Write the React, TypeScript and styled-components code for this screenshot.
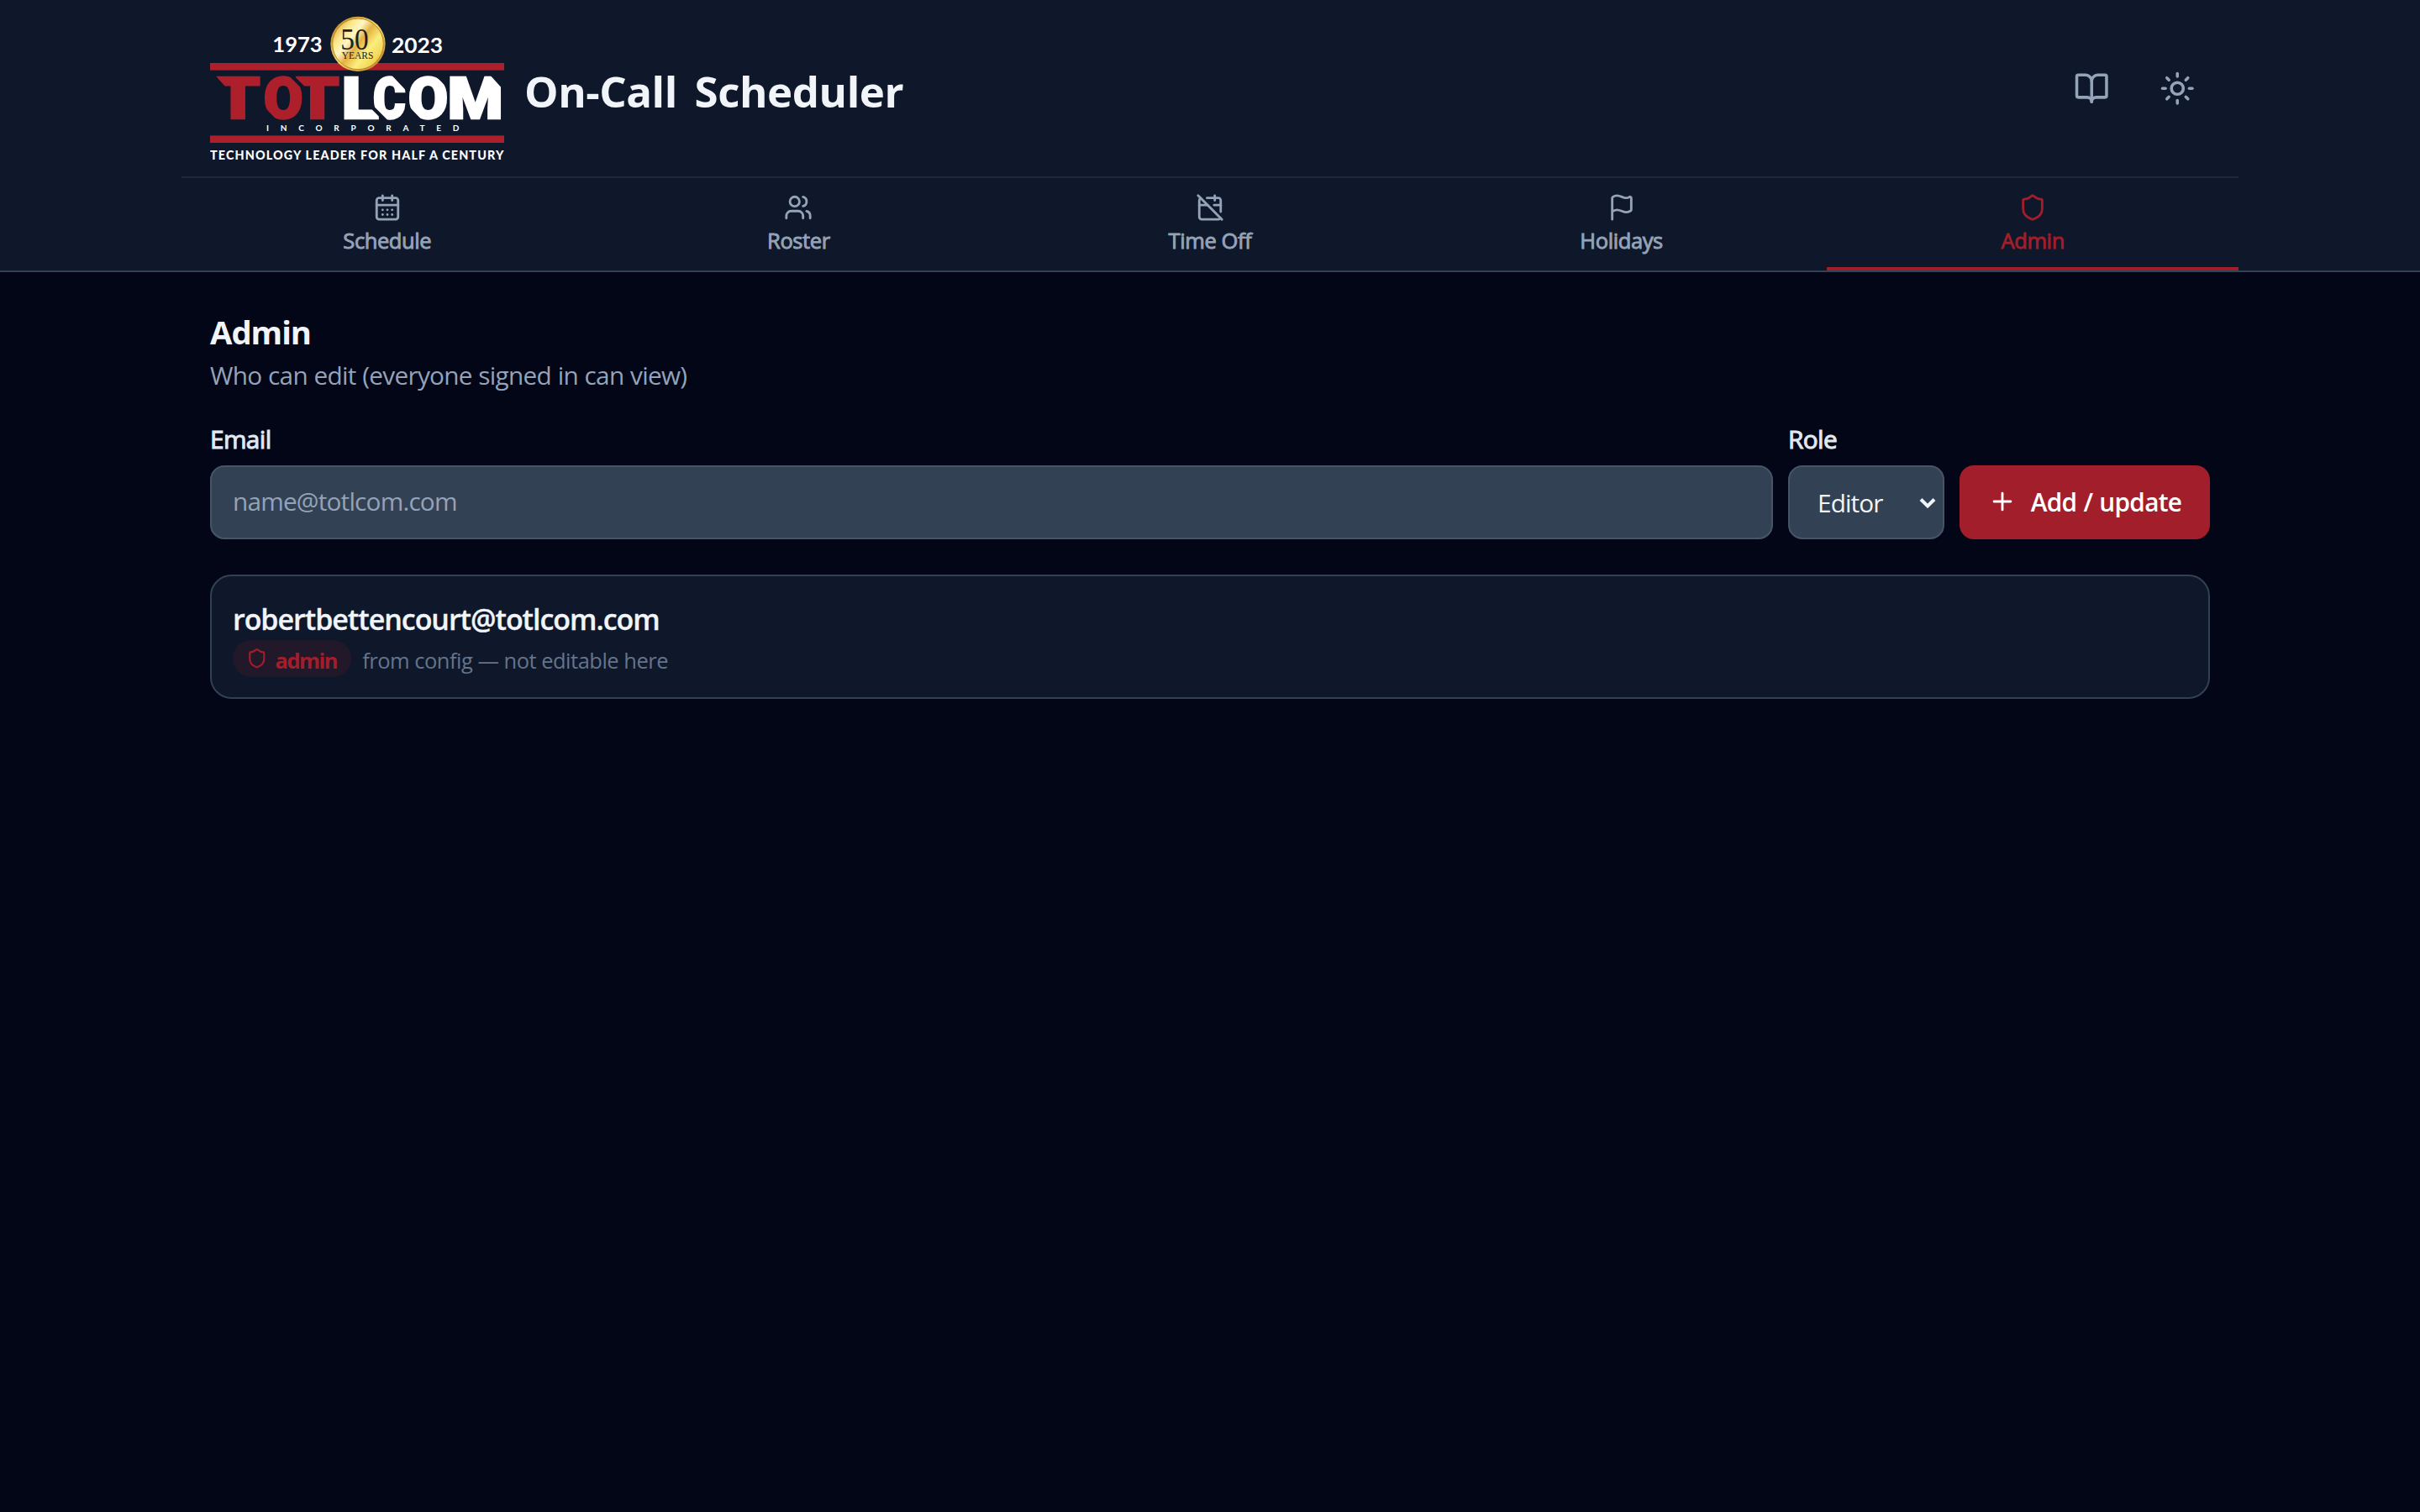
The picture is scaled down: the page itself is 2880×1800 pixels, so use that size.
import { useState } from "react";
import styled, { createGlobalStyle } from "styled-components";
import {
  BookOpen,
  CalendarDays,
  CalendarOff,
  Flag,
  Plus,
  Shield,
  Sun,
  Users,
} from "lucide-react";

const tabs = [
  { id: 1, name: "Schedule", icon: CalendarDays },
  { id: 2, name: "Roster", icon: Users },
  { id: 3, name: "Time Off", icon: CalendarOff },
  { id: 4, name: "Holidays", icon: Flag },
  { id: 5, name: "Admin", icon: Shield },
];

const users = [{ email: "robertbettencourt@totlcom.com", role: "admin" }];

function Logo() {
  return (
    <LogoSvg viewBox="60 51 1050 528" preserveAspectRatio="none">
      <defs>
        <linearGradient id="coin" x1="0" y1="0.1" x2="1" y2="0.9">
          <stop offset="0" stopColor="#d9a032" />
          <stop offset="0.22" stopColor="#fbe88a" />
          <stop offset="0.36" stopColor="#fff6c4" />
          <stop offset="0.5" stopColor="#e3b243" />
          <stop offset="0.68" stopColor="#fbee7c" />
          <stop offset="0.85" stopColor="#f3d65a" />
          <stop offset="1" stopColor="#c98a22" />
        </linearGradient>
        <linearGradient id="rim" x1="0" y1="0" x2="1" y2="1">
          <stop offset="0" stopColor="#b87a1c" />
          <stop offset="0.5" stopColor="#f4d868" />
          <stop offset="1" stopColor="#b5761a" />
        </linearGradient>
      </defs>

      <rect x="60" y="225" width="1050" height="26" fill="#ad1f2a" />
      <rect x="60" y="484" width="1050" height="26" fill="#ad1f2a" />

      <circle cx="588" cy="157" r="98" fill="url(#rim)" />
      <circle cx="588" cy="157" r="91" fill="url(#coin)" stroke="#b98728" strokeWidth="3" />
      <CoinText x="526" y="178" fontSize="106" textLength="100">50</CoinText>
      <CoinText x="530" y="210" fontSize="38" textLength="113">YEARS</CoinText>

      <YearText x="283" y="187" textLength="178">1973</YearText>
      <YearText x="708" y="190" textLength="183">2023</YearText>

      <WordMark $color="#ad1f2a" y="423">
        <Letter x="82" textLength="157">T</Letter>
        <Letter x="252" textLength="139">O</Letter>
        <Letter x="366" textLength="155">T</Letter>
      </WordMark>
      <WordMark $color="#ffffff" y="423">
        <Letter x="530" textLength="132">L</Letter>
        <Letter x="642" textLength="116">C</Letter>
        <Letter x="768" textLength="141">O</Letter>
        <Letter x="908" textLength="198">M</Letter>
      </WordMark>
      {/* slanted corners of the word mark */}
      <g fill="#0f172a">
        <path d="M74 264L122 318V322H74z" />
        <path d="M246 374L302 432H246z" />
        <path d="M706 266L757 320V266z" />
        <path d="M764 374L820 432H764z" />
        <path d="M860 266L914 320V266z" />
        <path d="M1058 266L1108 322V266z" />
      </g>
      <g stroke="#0f172a" strokeWidth="13">
        <path d="M344 264L404 324" />
        <path d="M628 372L688 432" />
      </g>

      <SmallText x="261" y="467" fontSize="30" textLength="688">INCORPORATED</SmallText>
      <TagText x="60" y="570" textLength="1048">TECHNOLOGY LEADER FOR HALF A CENTURY</TagText>
    </LogoSvg>
  );
}

export default function App() {
  const [activeTab, setActiveTab] = useState(5);
  const [email, setEmail] = useState("");
  const [role, setRole] = useState("editor");

  return (
    <>
      <GlobalStyle />
      <Header>
        <HeaderInner>
          <TopBar>
            <Logo />
            <Title>On-Call Scheduler</Title>
            <IconButton aria-label="Guide">
              <BookOpen size={42.5} />
            </IconButton>
            <IconButton aria-label="Theme">
              <Sun size={42.5} />
            </IconButton>
          </TopBar>
          <Nav>
            {tabs.map(({ id, name, icon: Icon }) => (
              <Tab key={id} $active={id === activeTab} onClick={() => setActiveTab(id)}>
                <Icon size={34} />
                <TabLabel>{name}</TabLabel>
              </Tab>
            ))}
          </Nav>
        </HeaderInner>
      </Header>

      <Main>
        <PageTitle>Admin</PageTitle>
        <PageDesc>Who can edit (everyone signed in can view)</PageDesc>

        <Form onSubmit={(e) => e.preventDefault()}>
          <EmailField>
            <Label>Email</Label>
            <Input
              value={email}
              placeholder="name@totlcom.com"
              onChange={(e) => setEmail(e.target.value)}
            />
          </EmailField>
          <RoleField>
            <Label>Role</Label>
            <SelectWrap>
              <Select value={role} onChange={(e) => setRole(e.target.value)}>
                <option value="editor">Editor</option>
                <option value="admin">Admin</option>
              </Select>
              <Chevron viewBox="0 0 20 14">
                <path d="M2 2.5L10 10.5L18 2.5" />
              </Chevron>
            </SelectWrap>
          </RoleField>
          <SubmitBtn type="submit">
            <Plus size={34} />
            <SubmitText>Add / update</SubmitText>
          </SubmitBtn>
        </Form>

        {users.map((user) => (
          <UserCard key={user.email}>
            <UserEmail>{user.email}</UserEmail>
            <UserMeta>
              <Badge>
                <Shield size={25.5} />
                <BadgeText>{user.role}</BadgeText>
              </Badge>
              <Note>from config — not editable here</Note>
            </UserMeta>
          </UserCard>
        ))}
      </Main>
    </>
  );
}

const GlobalStyle = createGlobalStyle`
  * {
    box-sizing: border-box;
    margin: 0;
    padding: 0;
  }
  body {
    min-height: 100vh;
    background: #020617;
    color: #f1f5f9;
    font-family: "Open Sans", "Noto Sans", sans-serif;
  }
  button, input, select {
    font: inherit;
    color: inherit;
  }
`;

const Header = styled.header`
  background: #0f172a;
  border-bottom: 2px solid #334155;
`;
const HeaderInner = styled.div`
  width: 2448px;
  margin: 0 auto;
`;
const TopBar = styled.div`
  display: flex;
  align-items: center;
  height: 210px;
  padding: 0 35px 0 34px;
`;
const LogoSvg = styled.svg`
  flex: none;
  width: 350px;
  height: 176px;
`;
const CoinText = styled.text.attrs({ lengthAdjust: "spacingAndGlyphs" })`
  font-family: "Liberation Serif", serif;
  fill: #22201a;
`;
const YearText = styled.text.attrs({ lengthAdjust: "spacingAndGlyphs" })`
  font-family: Lato, sans-serif;
  font-size: 76px;
  font-weight: 700;
  fill: #ffffff;
`;
const WordMark = styled.text<{ $color: string }>`
  font-family: Roboto, sans-serif;
  font-size: 205px;
  font-weight: 900;
  fill: ${({ $color }) => $color};
  stroke: ${({ $color }) => $color};
  stroke-width: 8px;
`;
const Letter = styled.tspan.attrs({ lengthAdjust: "spacingAndGlyphs" })``;
const SmallText = styled.text`
  font-family: Lato, sans-serif;
  font-weight: 700;
  fill: #ffffff;
`;
const TagText = styled.text`
  font-family: Lato, sans-serif;
  font-size: 43px;
  font-weight: 900;
  fill: #ffffff;
`;
const Title = styled.h1`
  flex: 1;
  padding-top: 5px;
  margin-left: 24px;
  font-size: 51px;
  font-weight: 700;
  line-height: 60px;
  letter-spacing: -0.45px;
  word-spacing: 8px;
`;
const IconButton = styled.button`
  display: flex;
  padding: 17px;
  margin-left: 25.5px;
  border: 0;
  background: none;
  color: #94a3b8;
  cursor: pointer;
`;

const Nav = styled.nav`
  display: grid;
  grid-template-columns: repeat(5, 1fr);
  border-top: 2px solid #1e293b;
`;
const Tab = styled.button<{ $active: boolean }>`
  display: flex;
  align-items: center;
  flex-direction: column;
  height: 110px;
  padding-top: 18px;
  border: 0;
  border-bottom: 4px solid ${({ $active }) => ($active ? "#a31e2b" : "transparent")};
  background: none;
  color: ${({ $active }) => ($active ? "#a31e2b" : "#94a3b8")};
  cursor: pointer;
`;
const TabLabel = styled.span`
  margin-top: 5px;
  font-size: 25.5px;
  line-height: 34px;
  letter-spacing: -0.4px;
  -webkit-text-stroke: 0.9px currentColor;
`;

const Main = styled.main`
  width: 2448px;
  margin: 0 auto;
  padding: 41px 34px;
`;
const PageTitle = styled.h2`
  font-size: 38.25px;
  font-weight: 700;
  line-height: 60px;
  letter-spacing: -1px;
`;
const PageDesc = styled.p`
  padding-top: 1px;
  font-size: 29.75px;
  line-height: 42px;
  letter-spacing: -0.72px;
  word-spacing: 0.6px;
  color: #94a3b8;
`;
const Form = styled.form`
  display: flex;
  align-items: flex-end;
  gap: 18px;
  margin-top: 34px;
`;
const EmailField = styled.div`
  flex: 1;
`;
const RoleField = styled.div`
  width: 186px;
`;
const Label = styled.label`
  display: block;
  margin-bottom: 10px;
  font-size: 29.75px;
  line-height: 42px;
  letter-spacing: -0.6px;
  color: #e2e8f0;
  -webkit-text-stroke: 1px currentColor;
`;
const Input = styled.input`
  display: block;
  width: 100%;
  height: 88px;
  padding: 0 25px 3px;
  border: 2px solid #475569;
  border-radius: 17px;
  background: #334155;
  font-size: 29.75px;
  letter-spacing: -0.8px;

  &::placeholder {
    color: #94a3b8;
  }
`;
const SelectWrap = styled.div`
  position: relative;
`;
const Select = styled.select`
  display: block;
  appearance: none;
  width: 100%;
  height: 88px;
  padding: 1px 33px 0;
  border: 2px solid #475569;
  border-radius: 17px;
  background: #334155;
  font-size: 29.75px;
  letter-spacing: -0.9px;
`;
const Chevron = styled.svg`
  position: absolute;
  top: 38px;
  right: 10px;
  width: 20px;
  height: 14px;
  fill: none;
  stroke: #f1f5f9;
  stroke-width: 4;
  pointer-events: none;
`;
const SubmitBtn = styled.button`
  display: flex;
  align-items: center;
  justify-content: center;
  gap: 17px;
  width: 298px;
  height: 88px;
  padding-bottom: 2px;
  border: 0;
  border-radius: 17px;
  background: #a31e2b;
  color: #ffffff;
  cursor: pointer;
`;
const SubmitText = styled.span`
  font-size: 29.75px;
  font-weight: 600;
  letter-spacing: -0.7px;
  word-spacing: 1px;
`;

const UserCard = styled.section`
  height: 148px;
  margin-top: 42px;
  padding: 26px 25px 24px;
  border: 2px solid #334155;
  border-radius: 25.5px;
  background: #0f172a;
`;
const UserEmail = styled.p`
  padding-top: 1px;
  font-size: 34px;
  font-weight: 600;
  line-height: 49px;
  letter-spacing: -1.03px;
  -webkit-text-stroke: 0.3px currentColor;
`;
const UserMeta = styled.div`
  display: flex;
  align-items: center;
  gap: 13px;
`;
const Badge = styled.span`
  display: flex;
  align-items: center;
  gap: 9px;
  height: 44px;
  padding: 0 17px 0 16px;
  border-radius: 22px;
  background: rgba(163, 30, 43, 0.12);
  color: #a31e2b;
`;
const BadgeText = styled.span`
  padding-top: 3px;
  font-size: 25.5px;
  font-weight: 700;
  line-height: 34px;
  letter-spacing: -1.5px;
`;
const Note = styled.span`
  padding-top: 3px;
  font-size: 25.5px;
  line-height: 34px;
  letter-spacing: -0.5px;
  color: #64748b;
`;
